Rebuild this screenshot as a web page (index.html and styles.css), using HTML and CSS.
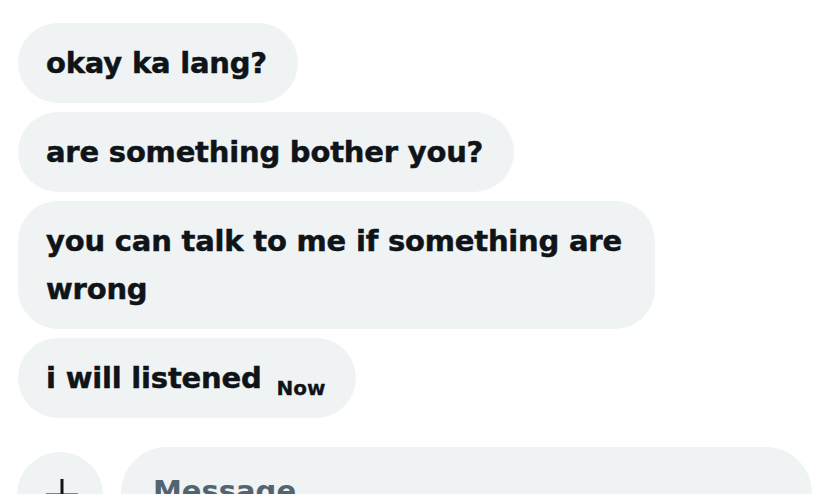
FILE: index.html
```html
<!DOCTYPE html>
<html>
<head>
<meta charset="utf-8">
<link rel="stylesheet" href="styles.css">
</head>
<body>
<main class="chat">
  <div class="thread">
    <div class="bubble">okay ka lang?</div>
    <div class="bubble">are something bother you?</div>
    <div class="bubble bubble--wide">you can talk to me if something are wrong</div>
    <div class="bubble">i will listened<span class="time">Now</span></div>
  </div>
  <div class="composer">
    <button class="add" aria-label="Add">
      <svg class="add-icon" width="34" height="34" viewBox="0 0 34 34"><path d="M17 1v32M1 17h32" stroke="#0f1419" stroke-width="3" fill="none"/></svg>
    </button>
    <div class="field">Message</div>
  </div>
</main>
</body>
</html>
```
FILE: styles.css
```css
html, body {
  margin: 0;
  padding: 0;
  background: #ffffff;
  overflow: hidden;
}
body {
  width: 828px;
  height: 494px;
  font-family: "DejaVu Sans", "Noto Sans", sans-serif;
  font-weight: bold;
  color: #0f1419;
}
.chat {
  padding: 23px 16px 0 18px;
}
.thread {
  display: flex;
  flex-direction: column;
  align-items: flex-start;
  gap: 9px;
}
.bubble {
  background: #eff3f4;
  border-radius: 40px;
  padding: 16px 31px 16px 28px;
  font-size: 29px;
  line-height: 48px;
  max-width: 578px;
  letter-spacing: -0.2px;
  -webkit-text-stroke: 0.5px #0f1419;
}
.time {
  font-size: 20px;
  margin-left: 15px;
  vertical-align: -7px;
  line-height: 1;
  letter-spacing: 0;
  -webkit-text-stroke: 0.3px #0f1419;
}
.composer {
  display: flex;
  align-items: center;
  gap: 18px;
  margin-top: 29px;
}
.add {
  width: 86px;
  height: 86px;
  border: none;
  border-radius: 50%;
  background: #eff3f4;
  padding: 0;
  margin: 0 0 0 -1px;
  display: flex;
  align-items: center;
  justify-content: center;
  flex: none;
}
.add-icon {
  display: block;
  transform: translate(2px, 0);
}
.field {
  flex: 1;
  height: 96px;
  box-sizing: border-box;
  background: #eff3f4;
  border-radius: 46px;
  padding: 20px 32px;
  font-size: 29px;
  line-height: 48px;
  color: #536471;
}
```
